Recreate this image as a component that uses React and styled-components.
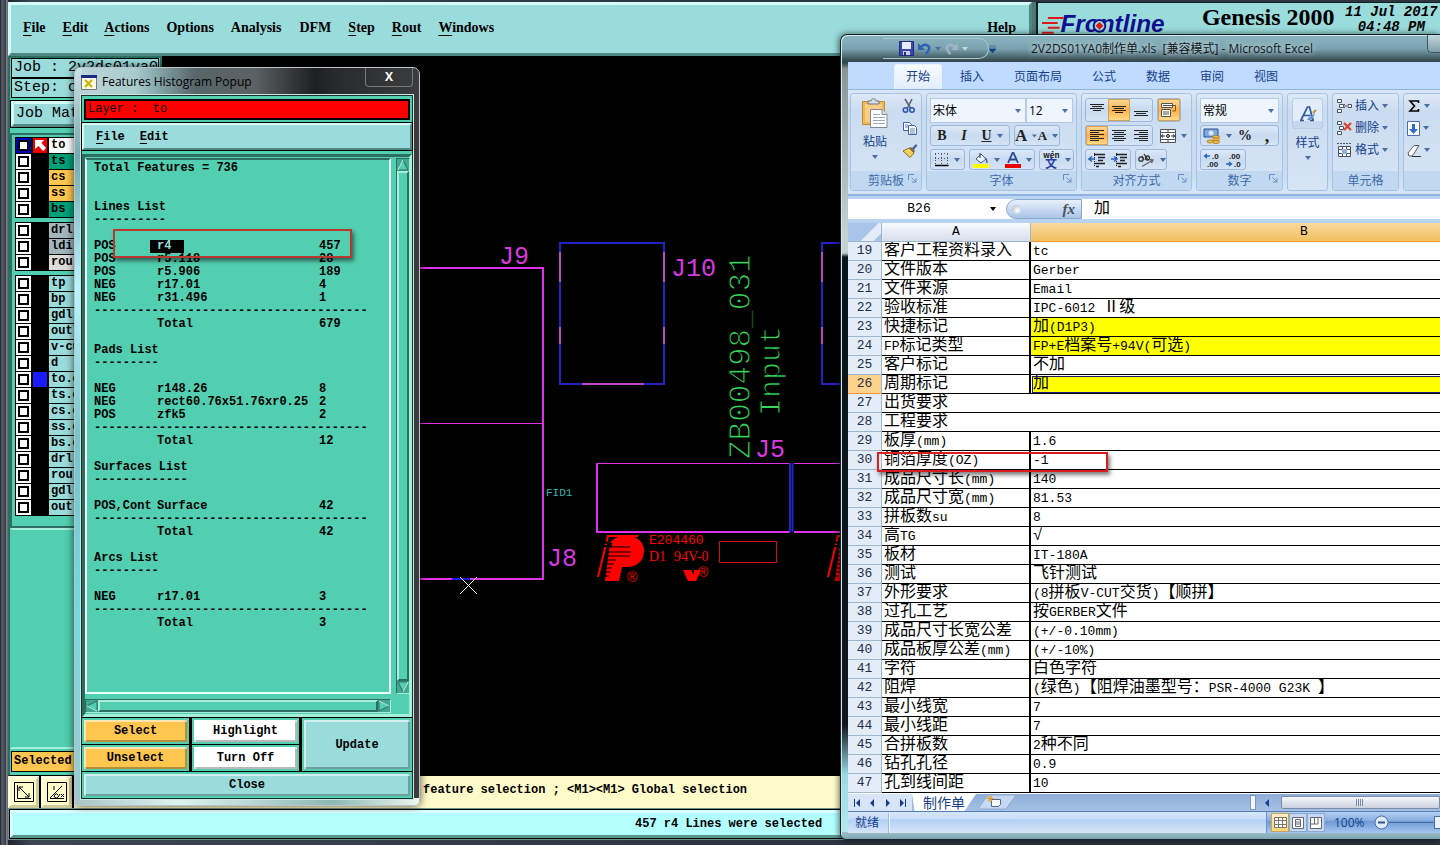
import React from 'react';
import styled, { createGlobalStyle, css } from 'styled-components';

const cjk = '"Open Sans", "Noto Sans CJK SC", sans-serif';
const mono = '"Liberation Mono", "Noto Sans CJK SC", monospace';
const serif = '"Liberation Serif", serif';

const teal = '#52cfb0';
const pale = '#9adbdb';
const deep = '#2c6e60';

const GlobalStyle = createGlobalStyle`
  * {
    box-sizing: border-box;
  }

  body {
    margin: 0;
    overflow: hidden;
    background: #000;
  }

  button, input, select {
    font: inherit;
    color: inherit;
    margin: 0;
    padding: 0;
    border: 0;
    background: none;
    border-radius: 0;
  }
`;

const raised = css`
  border: 3px solid;
  border-color: #d4fbf6 #4f8884 #4f8884 #d4fbf6;
`;

const Desktop = styled.div`
  position: relative;
  height: 100vh;
  overflow: hidden;
`;

/* ---------- Genesis main window ---------- */

const Genesis = styled.div`
  height: 100%;
  display: flex;
  flex-direction: column;
  padding: 2px 0 5px 8px;
  background: linear-gradient(90deg, #1d2027 0, #575f6b 2px, #343a46 6px, #b4bcc4 7px, #20242c 8px, #3b4553 30px, #2d3540 50%);
`;

const TopRow = styled.div`
  display: flex;
  height: 54px;
  gap: 4px;
  flex: none;
  background: #4e7672;
`;

const MenuPanel = styled.nav`
  ${raised}
  display: flex;
  align-items: center;
  background: ${pale};
  width: 1024px;
  padding: 0 13px 2px 12px;
  font: bold 14px ${serif};
`;

const MenuButton = styled.button`
  margin-right: ${({ $gap }) => $gap || 17}px;
  line-height: 16px;
  ${({ $last }) => $last && 'margin-left: auto; margin-right: 0;'}

  &::first-letter {
    text-decoration: ${({ $plain }) => ($plain ? 'none' : 'underline')};
    text-underline-offset: 3px;
  }
`;

const Brand = styled.div`
  flex: 1;
  display: flex;
  overflow: hidden;
  white-space: nowrap;
  background: ${pale};
  border-left: 2px solid #10201f;
  border-top: 1px solid #10201f;
  padding: 2px 0 0 4px;

  h1 {
    margin: 0 0 0 4px;
    font: bold 24px/24px ${serif};
  }

  p {
    margin: 0 0 0 8px;
    width: 100px;
    font: italic bold 14px/15px ${mono};
    text-align: center;
  }
`;

const Middle = styled.div`
  flex: 1;
  display: flex;
  min-height: 0;
  background: #000;
`;

const Sidebar = styled.div`
  width: 154px;
  display: flex;
  flex-direction: column;
  background: ${teal};
  border: 2px solid ${deep};
  border-bottom: 1px solid #000;
  font: 15px/18px ${mono};
`;

const JobLine = styled.div`
  height: 20px;
  border: 1px solid #000;
  background: ${pale};
  margin: 0 1px;
  padding-left: 2px;
  white-space: pre;
`;

const MatrixButton = styled.button`
  ${raised}
  height: 26px;
  margin: 3px 1px 6px;
  padding-left: 2px;
  background: ${pale};
  text-align: left;
  outline: 1px solid #000;
`;

const LayerPanel = styled.div`
  display: flex;
  flex-direction: column;
  gap: 4px;
  padding: 2px 3px 10px;
  border: 2px solid ${deep};
`;

const LayerGroup = styled.div`
  background: #000;
  padding: 1px 0 0 1px;
`;

const LayerRow = styled.label`
  display: grid;
  grid-template-columns: 15px 14px 1fr;
  gap: 2px;
  height: 16px;
  font: bold 12px/15px ${mono};

  input {
    appearance: none;
    width: 15px;
    height: 15px;
    border: 2px solid ${({ $active }) => ($active ? '#0000b8' : '#fff')};
    background: #fff;
    box-shadow: inset 0 0 0 2px #000;
  }

  i {
    display: block;
    height: 15px;
    background: ${({ $mark }) => $mark || '#000'};
  }

  span {
    height: 15px;
    padding-left: 2px;
    background: ${({ $color }) => $color};
  }
`;

const SidePanel = styled.div`
  flex: 1;
  border: 2px solid;
  border-color: #a5efdb #a5efdb ${teal} ${teal};
  border-bottom-color: #a5efdb;
`;

const SelectedBox = styled.div`
  height: 21px;
  margin: 2px 1px 3px;
  padding-left: 2px;
  border: 1px solid #000;
  background: #ffc64f;
  font: bold 12px/19px ${mono};
`;

const Board = styled.svg`
  flex: 1;
  min-width: 0;
  height: 100%;
`;

const PromptRow = styled.div`
  display: flex;
  gap: 2px;
  height: 32px;
  flex: none;
  background: #000;
`;

const CreamButton = styled.button`
  width: 31px;
  background: #fffbc9;
  border: 3px solid;
  border-color: #fffde0 #cfcb9d #cfcb9d #fffde0;
  display: grid;
  place-items: center;
`;

const Prompt = styled.div`
  flex: 1;
  background: #fffbc9;
  padding-left: 313px;
  font: bold 12px/28px ${mono};
  white-space: pre;
`;

const StatusLine = styled.div`
  flex: none;
  height: 32px;
  background: #6d9490;
  padding: 2px 0 2px 2px;

  div {
    height: 100%;
    border: 3px solid;
    border-color: #d8ffff #5d9490 #5d9490 #d8ffff;
    outline: 1px solid #000;
    background: #b3ffff;
    padding-left: 622px;
    font: bold 12px/22px ${mono};
  }
`;

/* ---------- Histogram popup ---------- */

const Popup = styled.section`
  position: absolute;
  left: 74px;
  top: 67px;
  width: 346px;
  height: 739px;
  display: flex;
  flex-direction: column;
  padding: 0 6px 6px;
  border: 1px solid #b8c4c8;
  border-radius: 7px 7px 5px 5px;
  box-shadow: 0 0 8px rgba(0, 0, 0, 0.7);
  background:
    linear-gradient(90deg, #a8c4c6, #dff2ef 30%, #8db8b4 75%, #eef6ee) bottom / 100% 7px no-repeat,
    linear-gradient(90deg, #d3e3e6 0, #86e0e8 5px, #4c7177 7px, transparent 8px) left 30px top 28px / 8px 100% no-repeat,
    linear-gradient(180deg, #cfe0e3, #73aab3 12%, #b9f5ff 30%, #77c3cc 50%, #76dbe1 75%, #9fc7cd) left / 7px 100% no-repeat,
    linear-gradient(90deg, #bdd5d9 0, #a9cccd 60px, #8aabae 80px, #57666a 120px, #5c6163 180px, #1d1f20 240px, #292a2b 260px, #3b3c3d 100%);
`;

const PopupTitle = styled.header`
  height: 27px;
  flex: none;
  display: flex;
  align-items: flex-start;
  font: 12px/27px "Open Sans", sans-serif;

  svg {
    margin: 7px 5px 0 0;
  }

  h2 {
    margin: 0;
    font: inherit;
  }

  button {
    margin-left: auto;
    width: 48px;
    height: 19px;
    border: 1px solid #77797b;
    border-top: 0;
    border-radius: 0 0 4px 4px;
    color: #fff;
    font: bold 12px/16px "Open Sans", sans-serif;
  }
`;

const PopupBody = styled.div`
  flex: 1;
  min-height: 0;
  display: flex;
  flex-direction: column;
  background: ${teal};
  border: 1px solid #15322c;
  outline: 1px solid #cfe5e0;
`;

const LayerTitle = styled.div`
  margin: 3px 2px;
  height: 21px;
  border: 2px solid #000;
  background: #f00;
  padding-left: 2px;
  font: 12px/17px ${mono};
  white-space: pre;
`;

const PopupMenu = styled.nav`
  ${raised}
  border-width: 2px;
  display: flex;
  gap: 15px;
  height: 27px;
  padding-left: 12px;
  background: ${pale};
  outline: 1px solid #000;
  font: bold 12px/22px ${mono};

  ${MenuButton} {
    margin: 0;
  }
`;

const ListFrame = styled.div`
  flex: 1;
  min-height: 0;
  margin-top: 4px;
  border: 3px solid;
  border-color: ${deep} #a5efdb #a5efdb ${deep};
  display: grid;
  grid-template-columns: 306px 14px;
  grid-template-rows: 1fr 14px;
  gap: 5px;
  padding: 1px 0 1px 0;
`;

const Listing = styled.div`
  border: 2px solid;
  border-color: ${deep} #e8fff8 #e8fff8 #f4fffb;
  padding: 2px 0 0 7px;
  font: bold 12px/13px ${mono};
  white-space: pre;
  overflow: hidden;
`;

const ListLine = styled.div`
  height: 13px;
  display: grid;
  grid-template-columns: 63px 162px 1fr;

  mark {
    justify-self: start;
    margin-left: -7px;
    padding: 0 13px 0 7px;
    background: #000;
    color: ${pale};
  }
`;

const ListHeading = styled.div`
  height: 13px;
`;

const Scroller = styled.div`
  display: flex;
  flex-direction: ${({ $across }) => ($across ? 'row' : 'column')};
  background: #43a892;
  border: 1px solid;
  border-color: ${deep} #a5efdb #a5efdb ${deep};

  div {
    flex: 1;
    border: 2px solid;
    border-color: #a5efdb ${deep} ${deep} #a5efdb;
    background: ${teal};
  }
`;

const PopupActions = styled.div`
  display: grid;
  grid-template-columns: 107px 107px 1fr;
  grid-template-rows: 26px 26px 26px;
  gap: 1px 3px;
  background: #000;
  padding-top: 1px;
`;

const ActionButton = styled.button`
  border: 3px solid ${teal};
  font: bold 12px/16px ${mono};
  background: ${({ $color }) => $color || pale};
  box-shadow:
    inset 2px 2px 0 rgba(255, 255, 255, 0.55),
    inset -2px -2px 0 rgba(0, 0, 0, 0.28);
  border-width: 2px;
  ${({ $tall }) => $tall && 'grid-column: 3; grid-row: 1 / 3;'}
  ${({ $wide }) => $wide && 'grid-column: 1 / 4;'}
`;

const RedFrame = styled.div`
  position: absolute;
  left: ${({ $x }) => $x}px;
  top: ${({ $y }) => $y}px;
  width: ${({ $w }) => $w}px;
  height: ${({ $h }) => $h}px;
  border: 2px solid ${({ $color }) => $color};
  box-shadow: 2px 3px 4px rgba(0, 0, 0, 0.5);
  pointer-events: none;
`;

/* ---------- Excel window ---------- */

const Excel = styled.section`
  position: absolute;
  left: 840px;
  right: 0;
  top: 34px;
  bottom: 5px;
  display: flex;
  flex-direction: column;
  overflow: hidden;
  padding: 0 0 6px 7px;
  border: 1px solid #15242a;
  border-right: 0;
  border-radius: 7px 0 0 6px;
  box-shadow: inset 1px 1px 0 #cfe9ee, -1px 0 6px rgba(0, 0, 0, 0.6);
  background:
    linear-gradient(180deg, #9dbfc9, #7fa6b3) bottom / 100% 7px no-repeat,
    linear-gradient(180deg, transparent 0, transparent 28px, #8a9496 34px, #c9d0d0 200px, #c9d0d0 218px, #0c1418 222px, #10161c 690px, #9adbe6 740px, #b8e8ee) left / 7px 100% no-repeat,
    linear-gradient(180deg, #8bb6c1 0, #79a2ae 14px, #334850 26px, #334850 28px);
  font: 12px/16px ${cjk};
  color: #15428b;
`;

const ExcelTitle = styled.header`
  height: 27px;
  flex: none;
  display: flex;
  align-items: center;
  color: #101820;

  h2 {
    margin: 0 0 0 35px;
    font: 12px/27px ${cjk};
    white-space: pre;
    text-shadow: 0 0 6px #fff;
  }

  > button {
    margin-left: auto;
    align-self: flex-start;
    width: 13px;
    height: 18px;
    border: 1px solid #3f555e;
    border-top: 0;
    border-right: 0;
    border-radius: 0 0 0 5px;
    background: linear-gradient(#c3d8df, #7f9faa);
  }
`;

const OfficeButton = styled.button`
  position: absolute;
  left: 10px;
  top: 6px;
  width: 36px;
  height: 38px;
`;

const QuickBar = styled.div`
  display: flex;
  align-items: center;
  height: 21px;
  width: 106px;
  margin-left: 35px;
  padding-left: 16px;
  gap: 4px;
  border: 1px solid #a9c6d2;
  border-left: 0;
  border-radius: 0 10px 10px 0;

  button {
    line-height: 0;
  }
`;

const Tabs = styled.div`
  height: 27px;
  flex: none;
  display: flex;
  gap: 6px;
  padding: 2px 0 0 46px;
  background: #bfdbff;

  button {
    padding: 0 11px;
    border: 1px solid transparent;
    border-bottom: 0;
    border-radius: 3px 3px 0 0;
    line-height: 24px;
    white-space: nowrap;
  }

  button[aria-selected='true'] {
    background: linear-gradient(#f5faff, #e3eefb);
    border-color: #e8f3ff;
  }
`;

const Ribbon = styled.div`
  height: 107px;
  flex: none;
  display: flex;
  gap: 4px;
  padding: 3px 0 3px 2px;
  border-top: 1px solid #8db2e3;
  border-bottom: 2px solid #8db2e3;
  background: linear-gradient(#dbe7f6, #c7daf0 20%, #c9dcf2 80%, #d7e6f7);
`;

const Group = styled.div`
  flex: none;
  width: ${({ $w }) => $w}px;
  display: flex;
  flex-direction: column;
  border: 1px solid #a6c3e3;
  border-radius: 3px;
  background: linear-gradient(#dde9f7, #cbdcf0 18%, #d6e5f6);
  overflow: hidden;

  footer {
    display: flex;
    justify-content: center;
    height: 19px;
    background: #c1d8f1;
    color: #3e6aaa;
    line-height: 19px;
    position: relative;
  }
`;

const Launcher = styled.svg`
  position: absolute;
  right: 4px;
  top: 3px;
`;

const GroupBody = styled.div`
  flex: 1;
  display: flex;
  flex-direction: ${({ $row }) => ($row ? 'row' : 'column')};
  gap: ${({ $row }) => ($row ? 6 : 3)}px;
  padding: 4px 3px 0;
`;

const Line = styled.div`
  display: flex;
  gap: ${({ $tight }) => ($tight ? 0 : 4)}px;
  height: ${({ $tall }) => ($tall ? 24 : 21)}px;
`;

const ToolBox = styled.div`
  display: flex;
  border: ${({ $bare }) => ($bare ? '1px solid transparent' : '1px solid #9ab7dc')};
  border-radius: 3px;
  background: ${({ $bare }) => ($bare ? 'none' : 'linear-gradient(#dbe8f8, #c9dbf1 50%, #d5e4f6)')};
`;

const Tool = styled.button`
  width: ${({ $w }) => $w || 22}px;
  display: flex;
  align-items: center;
  justify-content: center;
  gap: 5px;
  color: #222;
  background: ${({ $on }) => ($on ? 'linear-gradient(#fbdc9d, #fdb04b 50%, #fede8c)' : 'none')};
  box-shadow: ${({ $on }) => ($on ? 'inset 0 0 0 1px #d9a253' : 'none')};
  font: bold ${({ $size }) => $size || 14}px/18px ${serif};
`;

const Picker = styled.div`
  display: flex;
  align-items: center;
  width: ${({ $w }) => $w}px;
  height: 25px;
  border: 1px solid #b3cbe8;
  background: #eef5fd;
  color: #000;
  position: relative;

  select {
    appearance: none;
    width: 100%;
    height: 100%;
    padding-left: 2px;
  }

  svg {
    position: absolute;
    right: 4px;
    top: 10px;
    pointer-events: none;
  }
`;

const BigButton = styled.button`
  width: ${({ $w }) => $w}px;
  display: flex;
  flex-direction: column;
  align-items: center;
  gap: 5px;
  white-space: nowrap;
`;

const StyleTile = styled.span`
  display: grid;
  place-items: center;
  width: 31px;
  height: 31px;
  margin-bottom: 1px;
  border: 1px solid #b5cbe6;
  border-radius: 3px;
  background: linear-gradient(#e2edf9 75%, #c6d8ee 75%);
`;

const Stack = styled.div`
  display: flex;
  flex-direction: column;
  gap: ${({ $gap }) => $gap || 6}px;

  button {
    display: flex;
    align-items: center;
    gap: 3px;
    height: 16px;
    white-space: nowrap;
  }
`;

const FormulaBar = styled.div`
  height: 27px;
  flex: none;
  display: flex;
  align-items: center;
  background: #fff;
  border: solid #b9d3f3;
  border-width: 3px 0 4px;
  color: #000;
  font: 13px/18px ${mono};

  > input {
    width: 142px;
    text-align: center;
  }

  > input:last-child {
    flex: 1;
    text-align: left;
    padding-left: 12px;
    font-size: 16px;
  }
`;

const FxArea = styled.div`
  display: flex;
  align-items: center;
  justify-content: space-between;
  width: 76px;
  height: 20px;
  margin-left: 10px;
  padding: 0 6px 0 5px;
  border: 1px solid #8da9cf;
  border-radius: 10px 0 0 10px;
  background: linear-gradient(#e9f1fb, #a9c4e8);
  font: italic bold 15px/18px ${serif};
  color: #4a5260;

  &::before {
    content: '';
    width: 9px;
    height: 9px;
    border-radius: 50%;
    background: radial-gradient(circle at 60% 60%, #fff, #a9b5c4);
  }
`;

const SheetArea = styled.div`
  flex: 1;
  min-height: 0;
  overflow: hidden;
  background: #fff;
`;

const Sheet = styled.table`
  table-layout: fixed;
  width: 730px;
  border-collapse: separate;
  border-spacing: 0;
  color: #000;
  font: 16px/18px ${mono};

  thead th {
    height: 19px;
    padding: 0;
    border-right: 1px solid #9eb6ce;
    border-bottom: 1px solid #9eb6ce;
    background: linear-gradient(#f8fafd, #d6dfec);
    font-weight: 400;
    font-size: 13px;
    line-height: 18px;
  }

  thead th:first-child {
    background: linear-gradient(135deg, #a9c4e9 60%, #e4ecf7 61%, #e4ecf7 85%, #a9c4e9 86%);
  }

  thead th:last-child {
    background: linear-gradient(#f9d99f, #f1c15f);
    border-color: #f29536;
  }

  tbody tr {
    height: 19px;
  }
`;

const RowHead = styled.th`
  height: 19px;
  padding: 0;
  border-right: 1px solid #9eb6ce;
  border-bottom: 1px solid ${({ $on }) => ($on ? '#f29536' : '#9eb6ce')};
  background: ${({ $on }) => ($on ? '#fdd28d' : '#e4ecf7')};
  color: #1f2f4a;
  font: 13px/18px ${mono};
`;

const Cell = styled.td`
  height: 19px;
  padding: 0 0 0 2px;
  overflow: hidden;
  white-space: pre;
  border-bottom: 1px solid #000;
  border-right: ${({ $edge }) => ($edge ? '2px solid #000' : '0')};
  background: ${({ $fill }) => ($fill ? '#ff0' : '#fff')};
  box-shadow: ${({ $active }) => ($active ? 'inset 1px 1px 0 #fff, inset 2px 2px 0 #1a1a70, inset 0 -1px 0 #1a1a70' : 'none')};
  line-height: 18px;

  div {
    height: 18px;
  }
`;

const Latin = styled.span`
  font-size: 13px;
`;

const SheetTabs = styled.div`
  height: 17px;
  flex: none;
  display: flex;
  background: linear-gradient(#8fadd8, #a6c1e6);
  color: #153f8a;
  overflow: hidden;
`;

const SheetNav = styled.div`
  display: flex;
  width: 64px;
  padding-left: 2px;
  background: #d7e5f7;
  align-items: center;
`;

const NavButton = styled.button`
  width: 15px;
  line-height: 0;
`;

const SheetTab = styled.button`
  width: 64px;
  background: #fff;
  font-size: 14px;
  line-height: 16px;
  clip-path: polygon(0 0, 100% 0, 82% 100%, 4% 100%);
`;

const HScroll = styled.div`
  margin-left: auto;
  width: 191px;
  display: flex;
  align-items: center;
  gap: 8px;
  padding-left: 1px;

  > i {
    width: 6px;
    height: 15px;
    background: #f4f8fe;
    border: 1px solid #7d98c0;
  }

  > div {
    width: 161px;
    height: 13px;
    border: 1px solid #7c8ca8;
    border-radius: 2px;
    background: linear-gradient(#f6f8fb, #cbd2de);
    display: grid;
    place-items: center;
  }
`;

const ExcelStatus = styled.div`
  height: 22px;
  flex: none;
  display: flex;
  align-items: center;
  background: linear-gradient(#d7e6f9, #c7dcf8 35%, #b3d0f5 36%, #d7e5f7);
  border-top: 1px solid #567db0;
  line-height: 20px;
`;

const ReadyCell = styled.div`
  width: 41px;
  padding-left: 7px;
  border-right: 1px solid #9ebbe2;
  box-shadow: 1px 0 0 #eef5fe;
`;

const ZoomArea = styled.div`
  margin-left: auto;
  width: 174px;
  height: 100%;
  display: flex;
  align-items: center;
  overflow: hidden;
  padding-left: 4px;
  border-left: 1px solid #6f92c4;
  background: linear-gradient(#b5d0f4, #88aee0 40%, #6f9ad6 45%, #a6c6f0);

  output {
    margin: 0 9px 0 9px;
  }
`;

const ViewButton = styled.button`
  width: 18px;
  height: 19px;
  flex: none;
  display: grid;
  place-items: center;
  border: 1px solid ${({ $on }) => ($on ? '#c7a25c' : '#8fabd0')};
  background: ${({ $on }) => ($on ? 'linear-gradient(#fff0c5, #fdd375)' : '#c4d8f2')};
`;

const MinusButton = styled.button`
  flex: none;
  line-height: 0;
`;

const ZoomRange = styled.input`
  appearance: none;
  flex: none;
  width: 100px;
  height: 18px;
  background: linear-gradient(#4c6ea3, #4c6ea3) center / 100% 1px no-repeat;

  &::-webkit-slider-thumb {
    appearance: none;
    width: 9px;
    height: 13px;
    border: 1px solid #4c6ea3;
    background: #e9f1fb;
  }
`;

/* ---------- data ---------- */

const layers = [
  [
    ['to', '#fff', '#e00'],
    ['ts', '#00a078'],
    ['cs', '#ffc64f'],
    ['ss', '#ffc64f'],
    ['bs', '#00a078'],
  ],
  [
    ['drl', '#a3b5bd'],
    ['ldi', '#a3b5bd'],
    ['rou', '#dcdcdc'],
  ],
  [
    ['tp', pale],
    ['bp', pale],
    ['gdl', pale],
    ['outl', pale],
    ['v-cut', pale],
    ['d', pale],
    ['to.o', pale, '#1a1aff'],
    ['ts.o', pale],
    ['cs.o', pale],
    ['ss.o', pale],
    ['bs.o', pale],
    ['drl', pale],
    ['rou', pale],
    ['gdl', pale],
    ['outl', pale],
  ],
];

const rule = '-'.repeat(38);

// strings are full-width lines, arrays are [polarity, symbol, count]
const histogram = [
  'Total Features = 736', '', '',
  'Lines List', '----------', '',
  ['POS', 'r4', '457'],
  ['POS', 'r5.118', '28'],
  ['POS', 'r5.906', '189'],
  ['NEG', 'r17.01', '4'],
  ['NEG', 'r31.496', '1'],
  rule,
  ['', 'Total', '679'],
  '',
  'Pads List', '---------', '',
  ['NEG', 'r148.26', '8'],
  ['NEG', 'rect60.76x51.76xr0.25', '2'],
  ['POS', 'zfk5', '2'],
  rule,
  ['', 'Total', '12'],
  '',
  'Surfaces List', '-------------', '',
  ['POS,Cont', 'Surface', '42'],
  rule,
  ['', 'Total', '42'],
  '',
  'Arcs List', '---------', '',
  ['NEG', 'r17.01', '3'],
  rule,
  ['', 'Total', '3'],
];

const sheetRows = [
  ['客户工程资料录入', 'tc'],
  ['文件版本', 'Gerber'],
  ['文件来源', 'Email'],
  ['验收标准', 'IPC-6012 Ⅱ级'],
  ['快捷标记', '加(D1P3)', true],
  ['FP标记类型', 'FP+E档案号+94V(可选)', true],
  ['客户标记', '不加'],
  ['周期标记', '加', true],
  ['出货要求', null],
  ['工程要求', null],
  ['板厚(mm)', '1.6'],
  ['铜箔厚度(OZ)', '-1'],
  ['成品尺寸长(mm)', '140'],
  ['成品尺寸宽(mm)', '81.53'],
  ['拼板数su', '8'],
  ['高TG', '√'],
  ['板材', 'IT-180A'],
  ['测试', '飞针测试'],
  ['外形要求', '(8拼板V-CUT交货)【顺拼】'],
  ['过孔工艺', '按GERBER文件'],
  ['成品尺寸长宽公差', '(+/-0.10mm)'],
  ['成品板厚公差(mm)', '(+/-10%)'],
  ['字符', '白色字符'],
  ['阻焊', '(绿色)【阻焊油墨型号：PSR-4000 G23K 】'],
  ['最小线宽', '7'],
  ['最小线距', '7'],
  ['合拼板数', '2种不同'],
  ['钻孔孔径', '0.9'],
  ['孔到线间距', '10'],
];

// half-width runs are set smaller so that two of them span one han character
const Mixed = ({ text }) =>
  (text.match(/[\x20-\x7e]+|[^\x20-\x7e]+/g) || []).map((run, i) =>
    /[\x20-\x7e]/.test(run) ? <Latin key={i}>{run}</Latin> : <span key={i}>{run}</span>
  );

/* ---------- icons ---------- */

const Caret = ({ color = '#4a6da7' }) => (
  <svg width="6" height="4" viewBox="0 0 6 4"><path d="M0 0h6L3 4z" fill={color} /></svg>
);

const Bars = ({ widths, top = 3, align = 'left' }) => (
  <svg width="16" height="16" stroke="#222" strokeWidth="1">
    {widths.map((w, i) => {
      const x = align === 'left' ? 1 : align === 'right' ? 15 - w : (16 - w) / 2;
      return <path key={i} d={`M${x} ${top + i * 2 + 0.5}h${w}`} />;
    })}
  </svg>
);

const IndentIcon = ({ right }) => (
  <svg width="18" height="16" fill="none" stroke="#222">
    <path d="M6 2.5h11M10 5.5h7M10 8.5h5M6 11.5h11M8 14.5h3" strokeWidth="1.4" />
    <path d="M6.500 1v14" strokeDasharray="1 1" />
    <path d={right ? 'M1 7h5M4 4.500l3 2.500-3 2.500' : 'M7 7H2M4 4.500L1 7l3 2.500'} stroke="#2b62b8" strokeWidth="1.500" />
  </svg>
);

const OfficeLogo = () => (
  <svg width="36" height="38" viewBox="0 0 36 38">
    <defs>
      <radialGradient id="orb" cx="50%" cy="30%" r="75%">
        <stop offset="0" stopColor="#fff" />
        <stop offset="0.55" stopColor="#dce3ea" />
        <stop offset="1" stopColor="#8496a8" />
      </radialGradient>
    </defs>
    <circle cx="18" cy="19" r="17.500" fill="url(#orb)" stroke="#74899c" />
    <g fill="none" strokeWidth="2.800">
      <path d="M16 9.500h-6a2 2 0 0 0-2 2v5a2 2 0 0 0 2 2h2M16 9.500v7" stroke="#d9481c" />
      <path d="M20 13.500h5.500a1.500 1.500 0 0 1 1.500 1.500v4h-6" stroke="#3f8fd2" strokeWidth="2.200" />
      <path d="M9 22v6.500h7.500V22z" stroke="#f2a31b" />
      <path d="M20 22.500h7v6h-7z" stroke="#6da52c" />
    </g>
    <path d="M14 17h8v6h-8z" fill="#fff" opacity="0.800" />
    <path d="M15.500 17.500h5v4.500h-5z" fill="none" stroke="#e9822b" />
  </svg>
);

const SaveIcon = () => (
  <svg width="15" height="15">
    <path d="M.5.5h14v14h-14z" fill="#3c46b0" stroke="#232a80" />
    <path d="M3 1h9v7H3z" fill="#e6ecfa" />
    <path d="M4 10h7v4H4z" fill="#c9cfe6" />
    <path d="M5 11h2v3H5z" fill="#222a70" />
  </svg>
);

const UndoIcon = ({ flip, color }) => (
  <svg width="13" height="13" viewBox="0 0 13 13">
    <g transform={flip ? 'translate(13 0) scale(-1 1)' : undefined}>
      <path d="M3 5c3-4 9-2 8 2-.5 2.500-2 3.500-3.500 5" fill="none" stroke={color} strokeWidth="2.400" />
      <path d="M0 1v7h7z" fill={color} />
    </g>
  </svg>
);

const PasteIcon = () => (
  <svg width="28" height="31">
    <path d="M1.500 3.500h22v23h-22z" fill="#efb65a" stroke="#c98b32" />
    <path d="M4 6h17v18H4z" fill="#f7cf86" />
    <path d="M7 6V3h3c0-3 5-3 5 0h3v3z" fill="#d8dde3" stroke="#6f7780" />
    <path d="M9.500 11.500H21l5 5v13H9.500z" fill="#fff" stroke="#7c8a9c" />
    <path d="M21 11.500v5h5" fill="#dfe6ee" stroke="#7c8a9c" />
    <path d="M12 16.500h7M12 19.500h12M12 22.500h12M12 25.500h12" stroke="#9aa9bd" />
  </svg>
);

const CutIcon = () => (
  <svg width="14" height="16" fill="none">
    <path d="M3 1l6 10M10 1L5 11" stroke="#5b6675" strokeWidth="1.600" />
    <circle cx="3.500" cy="12" r="2.200" stroke="#2c58b0" strokeWidth="1.600" />
    <circle cx="10" cy="12" r="2.200" stroke="#2c58b0" strokeWidth="1.600" />
  </svg>
);

const CopyIcon = () => (
  <svg width="16" height="14" fill="#fff" stroke="#3a63a8">
    <path d="M1.500 1.500h6l2 2v6h-8z" />
    <path d="M6.500 4.500h6l2 2v7h-8z" />
    <path d="M3 4h3M3 6h3M8 8h5M8 10h5M8 12h5" strokeWidth="0.800" />
  </svg>
);

const BrushIcon = () => (
  <svg width="16" height="15">
    <path d="M9 6l5-5 1.500 1.500L11 8z" fill="#4766a0" />
    <path d="M1 8l6-3 5 5-4 4.500z" fill="#efd25c" stroke="#8e6c20" />
    <path d="M7 5l5 5 1-2-4-4z" fill="#8a6a3c" />
  </svg>
);

const BorderIcon = () => (
  <svg width="14" height="14" stroke="#555">
    <path d="M.5 1v10M6.500 1v10M12.500 1v10M0 .5h13M0 5.500h13" strokeDasharray="1 2" />
    <path d="M0 12.500h13.500" stroke="#000" strokeWidth="1.500" />
  </svg>
);

const BucketIcon = () => (
  <svg width="16" height="16">
    <path d="M3 7l5-5 5 5-5 4z" fill="#eef3fa" stroke="#46597a" />
    <path d="M7 1v5M12 6c2 1 2 3 2 5" fill="none" stroke="#46597a" strokeWidth="1.300" />
    <path d="M0 12h16v4H0z" fill="#ff0" />
  </svg>
);

const FontColorIcon = () => (
  <svg width="16" height="16">
    <path d="M3 11l4.500-10h1L13 11M5 7.500h6" fill="none" stroke="#2c4b8e" strokeWidth="1.800" />
    <path d="M0 12h16v4H0z" fill="#e00" />
  </svg>
);

const WrapIcon = () => (
  <svg width="18" height="16" fill="#fff" stroke="#555">
    <path d="M1.500 1.500h11v4h-11zM1.500 7.500h9v7h-9zM3 3.500h12M3 10h6M3 12h6" />
    <path d="M15.500 3v6h-3" fill="none" stroke="#8a5a18" />
  </svg>
);

const MergeIcon = () => (
  <svg width="16" height="14" fill="#fff" stroke="#555">
    <path d="M.5.5h15v13H.5zM0 3.500h16M0 10.500h16M8 0v3M8 11v3" />
    <path d="M1 7h4M15 7h-4M3 5.500L1 7l2 1.500M13 5.500L15 7l-2 1.500" fill="none" stroke="#234" />
    <circle cx="8" cy="7" r="1.400" fill="none" stroke="#000" />
  </svg>
);

const OrientIcon = () => (
  <svg width="18" height="16" fill="none" stroke="#333" strokeWidth="1.300">
    <circle cx="4" cy="7" r="2.200" /><path d="M5 4l2 4M7 2l4 6" /><circle cx="10.500" cy="6" r="2" />
    <path d="M5 14.500L16 8M12.500 7.500L16 8l-1.500 3" stroke="#666" />
  </svg>
);

const MoneyIcon = () => (
  <svg width="18" height="16">
    <path d="M1 1h14v8H1z" fill="#7fa8df" stroke="#2b4f95" />
    <circle cx="8" cy="5" r="2.500" fill="#d9e7f9" />
    <g fill="#f2c14a" stroke="#a8741a" strokeWidth="0.800">
      <ellipse cx="13" cy="9" rx="3.500" ry="1.500" /><ellipse cx="13" cy="11.500" rx="3.500" ry="1.500" />
      <ellipse cx="13" cy="14" rx="3.500" ry="1.500" /><ellipse cx="7" cy="13.500" rx="3" ry="1.500" />
    </g>
  </svg>
);

const DecimalIcon = ({ more }) => (
  <svg width="18" height="16" fontFamily="Liberation Sans" fontSize="8" fontWeight="bold" fill="#222">
    <text x={more ? 9 : 4} y="7">{more ? '.0' : '.00'}</text>
    <text x={more ? 4 : 9} y="15">{more ? '.00' : '.0'}</text>
    <path d={more ? 'M7 4H2M4 2L1.500 4 4 6' : 'M1 12h5M4 10l2.500 2L4 14'} fill="none" stroke="#2b62b8" strokeWidth="1.300" />
  </svg>
);

const StyleIcon = () => (
  <svg width="18" height="18">
    <path d="M2 15L8.500 2h2L14 15M4.500 10.500h7M1 15.500h4M11 15.500h4" fill="none" stroke="#2f5a9c" strokeWidth="1.700" />
    <path d="M8 15c2-4 4-3 8-7-1 5-4 8-8 7z" fill="#6b95d0" />
    <path d="M14 8l3-3" stroke="#c98b32" strokeWidth="2" />
  </svg>
);

const CellIcon = ({ kind }) => (
  <svg width="16" height="16" fill="#fff" stroke="#4a5568">
    {kind === 'format' ? (
      <>
        <path d="M2.500 4.500h12v10h-12zM2 7.500h13M2 11.500h13M6.500 4v11M10.500 4v11" />
        <path d="M6 7h5v5H6z" fill="#8fb2e4" stroke="none" />
        <path d="M1 1.500h14" strokeDasharray="2 1" />
      </>
    ) : (
      <>
        <path d="M1.500 1.500h4v3h-4zM1.500 11.500h4v3h-4zM3.500 6.500h4v3h-4z" />
        {kind === 'insert'
          ? <path d="M12 6.500h3.500v3H12zM7 8h4M9 6L7 8l2 2" />
          : <path d="M8 3l7 7M15 3l-7 7" stroke="#e0402a" strokeWidth="2.200" />}
      </>
    )}
  </svg>
);

const FillIcon = () => (
  <svg width="13" height="15">
    <path d="M.5.5h12v14H.5z" fill="#fff" stroke="#4a6da7" />
    <path d="M5 3h3v5h3l-4.500 5L2 8h3z" fill="#2f6fd0" />
  </svg>
);

const EraserIcon = () => (
  <svg width="14" height="13">
    <path d="M1 9l6-7.500h5L7 9.500 5 12H2z" fill="#fff" stroke="#556" />
    <path d="M5 12.500h9" stroke="#333" />
  </svg>
);

const FrontlineLogo = () => (
  <svg width="160" height="30" viewBox="0 0 160 30">
    <g stroke="#e01818" strokeWidth="2">
      <path d="M6 13h16M0 18h16M6 23h12M0 28h12" />
    </g>
    <text x="19" y="27" fontFamily="Liberation Sans" fontSize="25" fontWeight="bold" fontStyle="italic" fill="#101090">
      Frontline
    </text>
    <circle cx="59" cy="21" r="6" fill={pale} stroke="#101090" strokeWidth="2" />
    <path d="M59 17l4 4-4 4-4-4z" fill="#e01818" />
  </svg>
);

const ArrowGlyph = ({ turn }) => (
  <svg width="12" height="12" viewBox="0 0 12 12">
    <g transform={`rotate(${turn} 6 6)`}>
      <path d="M6 1L1 11h10z" fill={teal} stroke={deep} />
      <path d="M6 1L1 11" stroke="#c6fff0" />
    </g>
  </svg>
);

const NavGlyph = ({ d }) => (
  <svg width="9" height="8"><path d={d} fill="#153f8a" /></svg>
);

const PcbMark = () => (
  <g fill="#f00">
    <path d="M598 577l10-41h30" fill="none" stroke="#f00" strokeWidth="2" />
    <path d="M605 581l5-38c8-11 34-10 34 8 0 12-10 17-22 16l-3 14z" />
    <path d="M608 547h22M607 552h24M606 556h24M606 560h10M605 564h9M604 568h8M604 572h7M603 576h6" stroke="#000" />
    <path d="M604 542l8 2M604 546l8 0" stroke="#000" strokeWidth="2" />
  </g>
);

const BoardDrawing = () => (
  <Board aria-label="PCB legend layer">
    <g transform="translate(-162 -56)" fill="none">
      <g stroke="#e030e8" strokeWidth="2">
        <path d="M420 268h123v311H420" />
        <path d="M420 423.500h123" strokeWidth="1" />
        <path d="M790 463.500H597" strokeWidth="1" />
        <path d="M597 463v69h193M794 532h60" />
        <path d="M794 463.500h60" strokeWidth="1" />
      </g>
      <path d="M452 579h18" stroke="#1c1cf0" strokeWidth="2" />
      <g stroke="#2222c8" strokeWidth="2">
        <path d="M560 243h104v141H560z" />
        <path d="M790 463v69M792.500 463v69" />
        <path d="M860 243h-38v141h38" />
      </g>
      <path d="M560 252v30M560 327v17M664 252v30M664 327v17M582 384h62M822 252v30M822 327v17" stroke="#b848c0" strokeWidth="2" />
      <path d="M460 577l17 17M477 577l-17 17" stroke="#fff" />
      <g fill="#d838e0" fontFamily="Liberation Mono" fontSize="25">
        <text x="499" y="264">J9</text>
        <text x="671" y="276">J10</text>
        <text x="755" y="457">J5</text>
        <text x="547" y="566">J8</text>
      </g>
      <g fill="#35d45a" stroke="#000" strokeWidth="1" fontFamily="Liberation Mono">
        <text transform="translate(750 459) rotate(-90)" fontSize="31">ZB00498_031</text>
        <text transform="translate(780 416) rotate(-90)" fontSize="30">Input</text>
      </g>
      <text x="546" y="496" fill="#28b8b0" fontFamily="Liberation Mono" fontSize="11">FID1</text>
      <PcbMark />
      <g transform="translate(230 0)"><PcbMark /></g>
      <g fill="#f00">
        <text x="649" y="544" fontFamily="Liberation Mono" fontSize="13">E204460</text>
        <text x="649" y="561" fontFamily="Liberation Serif" fontSize="14">D1</text>
        <text x="674" y="561" fontFamily="Liberation Serif" fontSize="14">94V-0</text>
        <text x="627" y="582" fontFamily="Liberation Sans" fontSize="14">®</text>
        <text x="698" y="577" fontFamily="Liberation Sans" fontSize="14">®</text>
        <path d="M683 570h8l3 5v-5h7l-5 11h-8z" />
      </g>
      <path d="M719.500 541.500h57v21h-57z" stroke="#d01010" />
    </g>
  </Board>
);

/* ---------- windows ---------- */

const GenesisWindow = () => (
  <Genesis>
    <TopRow>
      <MenuPanel>
        <MenuButton>File</MenuButton>
        <MenuButton $gap={16}>Edit</MenuButton>
        <MenuButton>Actions</MenuButton>
        <MenuButton $plain>Options</MenuButton>
        <MenuButton $plain $gap={18}>Analysis</MenuButton>
        <MenuButton $plain>DFM</MenuButton>
        <MenuButton>Step</MenuButton>
        <MenuButton>Rout</MenuButton>
        <MenuButton>Windows</MenuButton>
        <MenuButton $plain $last>Help</MenuButton>
      </MenuPanel>
      <Brand>
        <FrontlineLogo />
        <h1>Genesis 2000</h1>
        <p>11 Jul 2017<br />04:48 PM</p>
      </Brand>
    </TopRow>
    <Middle>
      <Sidebar>
        <JobLine>Job : 2v2ds01ya0</JobLine>
        <JobLine>Step: cad</JobLine>
        <MatrixButton>Job Matrix</MatrixButton>
        <LayerPanel>
          {layers.map((group, g) => (
            <LayerGroup key={g}>
              {group.map(([name, color, mark], i) => (
                <LayerRow key={i} $color={color} $mark={mark} $active={g === 0 && i === 0}>
                  <input type="checkbox" />
                  <i>
                    {name === 'to' && (
                      <svg width="14" height="15"><path d="M2 2h9L8.500 5l4.500 5-3 3-4.500-5L2 11z" fill="#fff" /></svg>
                    )}
                  </i>
                  <span>{name}</span>
                </LayerRow>
              ))}
            </LayerGroup>
          ))}
        </LayerPanel>
        <SidePanel />
        <SelectedBox>Selected : 457</SelectedBox>
      </Sidebar>
      <BoardDrawing />
    </Middle>
    <PromptRow>
      <CreamButton aria-label="Zoom extents">
        <svg width="20" height="20" fill="none" stroke="#000">
          <path d="M.5.5h19v19H.5zM3.500 3v13.500H17M5 5l10 10M5 9V5h4M15 11v4h-4" />
        </svg>
      </CreamButton>
      <CreamButton aria-label="Measure">
        <svg width="20" height="20" fill="none" stroke="#000">
          <path d="M.5.5h19v19H.5zM3 16L15 4M3 16.500h14M7 4v4M11 13a2 2 0 1 0 0 2l2-3M14 12l3 3M17 12l-3 3" />
        </svg>
      </CreamButton>
      <Prompt>{'<M1> Single feature selection ; <M1><M1> Global selection'.slice(7)}</Prompt>
    </PromptRow>
    <StatusLine><div>457 r4 Lines were selected</div></StatusLine>
  </Genesis>
);

const HistogramPopup = () => (
  <Popup>
    <PopupTitle>
      <svg width="16" height="15">
        <path d="M.5.5h15v14H.5z" fill="#f8f8e8" stroke="#777" />
        <path d="M0 0h16v3H0z" fill="#1c2a80" />
        <path d="M4 5l7 7M11 5l-7 7" stroke="#c9b400" strokeWidth="2" />
      </svg>
      <h2>Features Histogram Popup</h2>
      <button aria-label="Close window">X</button>
    </PopupTitle>
    <PopupBody>
      <LayerTitle>Layer :  to</LayerTitle>
      <PopupMenu>
        <MenuButton>File</MenuButton>
        <MenuButton>Edit</MenuButton>
      </PopupMenu>
      <ListFrame>
        <Listing>
          {histogram.map((line, i) =>
            Array.isArray(line) ? (
              <ListLine key={i}>
                <span>{line[0]}</span>
                {line[1] === 'r4' ? <mark>r4</mark> : <span>{line[1]}</span>}
                <span>{line[2]}</span>
              </ListLine>
            ) : (
              <ListHeading key={i}>{line}</ListHeading>
            )
          )}
        </Listing>
        <Scroller>
          <ArrowGlyph turn={0} />
          <div />
          <ArrowGlyph turn={180} />
        </Scroller>
        <Scroller $across>
          <ArrowGlyph turn={-90} />
          <div />
          <ArrowGlyph turn={90} />
        </Scroller>
      </ListFrame>
      <PopupActions>
        <ActionButton $color="#ffc64f">Select</ActionButton>
        <ActionButton $color="#fff">Highlight</ActionButton>
        <ActionButton $tall>Update</ActionButton>
        <ActionButton $color="#ffc64f">Unselect</ActionButton>
        <ActionButton $color="#fff">Turn Off</ActionButton>
        <ActionButton $wide>Close</ActionButton>
      </PopupActions>
    </PopupBody>
  </Popup>
);

const GroupFooter = ({ children, launcher }) => (
  <footer>
    {children}
    {launcher && (
      <Launcher width="9" height="9" fill="none" stroke="#6a8cc0">
        <path d="M.5 6V.5H6M3.500 3.500l4 4M8 4v4H4" />
      </Launcher>
    )}
  </footer>
);

const ExcelRibbon = () => (
  <Ribbon>
    <Group $w={72}>
      <GroupBody $row>
        <BigButton $w={42}><PasteIcon />粘贴<Caret /></BigButton>
        <Stack>
          <button aria-label="剪切"><CutIcon /></button>
          <button aria-label="复制"><CopyIcon /></button>
          <button aria-label="格式刷"><BrushIcon /></button>
        </Stack>
      </GroupBody>
      <GroupFooter launcher>剪贴板</GroupFooter>
    </Group>

    <Group $w={151}>
      <GroupBody>
        <Line $tall $tight>
          <Picker $w={96}>
            <select aria-label="字体"><option>宋体</option></select>
            <Caret />
          </Picker>
          <Picker $w={47}>
            <select aria-label="字号"><option>12</option></select>
            <Caret />
          </Picker>
        </Line>
        <Line>
          <ToolBox>
            <Tool>B</Tool>
            <Tool><em>I</em></Tool>
            <Tool $w={34}><u>U</u><Caret /></Tool>
          </ToolBox>
          <ToolBox>
            <Tool $size={17}>A<Caret /></Tool>
            <Tool $size={13}>A<Caret /></Tool>
          </ToolBox>
        </Line>
        <Line>
          <ToolBox><Tool $w={33}><BorderIcon /><Caret /></Tool></ToolBox>
          <ToolBox>
            <Tool $w={32}><BucketIcon /><Caret /></Tool>
            <Tool $w={32}><FontColorIcon /><Caret /></Tool>
          </ToolBox>
          <ToolBox>
            <Tool $w={33}>
              <svg width="18" height="18" fontFamily="Noto Sans CJK SC" fill="#222">
                <text x="1" y="7" fontSize="8" fontWeight="bold">wén</text>
                <text x="3" y="17" fontSize="12" fill="#2c3fa8">文</text>
              </svg>
              <Caret />
            </Tool>
          </ToolBox>
        </Line>
      </GroupBody>
      <GroupFooter launcher>字体</GroupFooter>
    </Group>

    <Group $w={111}>
      <GroupBody>
        <Line $tall>
          <ToolBox>
            <Tool><Bars widths={[14, 10, 14, 8]} top={2} align="center" /></Tool>
            <Tool $on><Bars widths={[14, 10, 14, 8]} top={4} align="center" /></Tool>
            <Tool><Bars widths={[14, 10, 14]} top={9} align="center" /></Tool>
          </ToolBox>
          <ToolBox><Tool $on><WrapIcon /></Tool></ToolBox>
        </Line>
        <Line>
          <ToolBox>
            <Tool $on><Bars widths={[14, 9, 14, 9, 14, 9]} top={2} /></Tool>
            <Tool><Bars widths={[14, 10, 14, 10, 14, 10]} top={2} align="center" /></Tool>
            <Tool><Bars widths={[14, 9, 14, 9, 14, 9]} top={2} align="right" /></Tool>
          </ToolBox>
          <ToolBox $bare><Tool $w={30}><MergeIcon /><Caret /></Tool></ToolBox>
        </Line>
        <Line>
          <ToolBox>
            <Tool><IndentIcon /></Tool>
            <Tool><IndentIcon right /></Tool>
          </ToolBox>
          <ToolBox><Tool $w={30}><OrientIcon /><Caret /></Tool></ToolBox>
        </Line>
      </GroupBody>
      <GroupFooter launcher>对齐方式</GroupFooter>
    </Group>

    <Group $w={87}>
      <GroupBody>
        <Line $tall>
          <Picker $w={79}>
            <select aria-label="数字格式"><option>常规</option></select>
            <Caret />
          </Picker>
        </Line>
        <Line>
          <ToolBox>
            <Tool $w={33}><MoneyIcon /><Caret /></Tool>
            <Tool>%</Tool>
            <Tool $size={18}>,</Tool>
          </ToolBox>
        </Line>
        <Line>
          <ToolBox>
            <Tool><DecimalIcon more /></Tool>
            <Tool><DecimalIcon /></Tool>
          </ToolBox>
        </Line>
      </GroupBody>
      <GroupFooter launcher>数字</GroupFooter>
    </Group>

    <Group $w={41}>
      <GroupBody>
        <BigButton $w={33}><StyleTile><StyleIcon /></StyleTile>样式<Caret /></BigButton>
      </GroupBody>
    </Group>

    <Group $w={67}>
      <GroupBody>
        <Stack>
          <button><CellIcon kind="insert" />插入<Caret /></button>
          <button><CellIcon kind="delete" />删除<Caret /></button>
          <button><CellIcon kind="format" />格式<Caret /></button>
        </Stack>
      </GroupBody>
      <GroupFooter>单元格</GroupFooter>
    </Group>

    <Group $w={160}>
      <GroupBody $row>
        <Stack>
          <button aria-label="求和">
            <svg width="14" height="14"><path d="M11.500 4V2H3l4.500 5L3 12h8.500v-2" fill="none" stroke="#000" strokeWidth="1.600" /></svg>
            <Caret />
          </button>
          <button aria-label="填充"><FillIcon /><Caret /></button>
          <button aria-label="清除"><EraserIcon /><Caret /></button>
        </Stack>
      </GroupBody>
      <GroupFooter />
    </Group>
  </Ribbon>
);

const ExcelWindow = () => (
  <Excel>
    <ExcelTitle>
      <QuickBar>
        <button aria-label="保存"><SaveIcon /></button>
        <button aria-label="撤消"><UndoIcon color="#2f62b5" /></button>
        <Caret />
        <button aria-label="恢复"><UndoIcon flip color="#9fb3c4" /></button>
        <Caret color="#c4d3dd" />
      </QuickBar>
      <svg width="7" height="8" style={undefined}><path d="M0 1h7M0 3h7M0 4l3.500 4L7 4z" fill="#15428b" stroke="#15428b" strokeWidth="0.500" /></svg>
      <h2>{'2V2DS01YA0制作单.xls  [兼容模式] - Microsoft Excel'}</h2>
      <button aria-label="最小化" />
    </ExcelTitle>
    <Tabs role="tablist">
      {['开始', '插入', '页面布局', '公式', '数据', '审阅', '视图'].map((name, i) => (
        <button key={name} role="tab" aria-selected={i === 0}>{name}</button>
      ))}
    </Tabs>
    <ExcelRibbon />
    <FormulaBar>
      <input aria-label="名称框" defaultValue="B26" />
      <Caret color="#000" />
      <FxArea>fx</FxArea>
      <input aria-label="编辑栏" defaultValue="加" />
    </FormulaBar>
    <SheetArea>
      <Sheet>
        <colgroup>
          <col width="34" />
          <col width="149" />
          <col />
        </colgroup>
        <thead>
          <tr><th /><th>A</th><th>B</th></tr>
        </thead>
        <tbody>
          {sheetRows.map(([label, value, fill], i) => (
            <tr key={label}>
              <RowHead $on={i === 7}>{i + 19}</RowHead>
              <Cell $edge={value !== null}><div><Mixed text={label} /></div></Cell>
              <Cell $fill={fill} $active={i === 7}><div><Mixed text={value || ''} /></div></Cell>
            </tr>
          ))}
        </tbody>
      </Sheet>
    </SheetArea>
    <SheetTabs>
      <SheetNav>
        <NavButton aria-label="第一个"><NavGlyph d="M1 0h1v8H1zM7 0v8L3 4z" /></NavButton>
        <NavButton aria-label="上一个"><NavGlyph d="M6 0v8L2 4z" /></NavButton>
        <NavButton aria-label="下一个"><NavGlyph d="M3 0v8l4-4z" /></NavButton>
        <NavButton aria-label="最后一个"><NavGlyph d="M7 0h1v8H7zM2 0v8l4-4z" /></NavButton>
      </SheetNav>
      <SheetTab>制作单</SheetTab>
      <svg width="44" height="17">
        <path d="M2 15L12 1h28L30 15z" fill="#c5d9f3" stroke="#8eabd4" />
        <path d="M15.500 5.500h9v5l-2 2h-7z" fill="#fff" stroke="#56688a" />
        <path d="M14 1v7M10.500 4.500h7M12 2l4 5M16 2l-4 5" stroke="#eb9c1e" />
      </svg>
      <HScroll>
        <i />
        <NavGlyph d="M5 0v8L1 4z" />
        <div><svg width="8" height="7"><path d="M.5 0v7M2.500 0v7M4.500 0v7M6.500 0v7" stroke="#7c8ca8" /></svg></div>
      </HScroll>
    </SheetTabs>
    <ExcelStatus>
      <ReadyCell>就绪</ReadyCell>
      <ZoomArea>
        <ViewButton $on aria-label="普通">
          <svg width="13" height="11" fill="#fff" stroke="#776"><path d="M.5.5h12v10H.5zM0 3.500h13M0 7.500h13M4.500 0v11M8.500 0v11" /></svg>
        </ViewButton>
        <ViewButton aria-label="页面布局视图">
          <svg width="12" height="12" fill="#fff" stroke="#667"><path d="M.5.5h11v11H.5zM3.500 2.500h5v7h-5zM4 5h4M4 7h4" /></svg>
        </ViewButton>
        <ViewButton aria-label="分页预览">
          <svg width="12" height="12" fill="#fff" stroke="#667"><path d="M.5.5h11v11H.5zM4.500 0v7M8 0v7H0" /></svg>
        </ViewButton>
        <output>100%</output>
        <MinusButton aria-label="缩小">
          <svg width="15" height="15"><circle cx="7.500" cy="7.500" r="6.500" fill="#dfeaf8" stroke="#4c6ea3" /><path d="M4 7.500h7" stroke="#36527f" strokeWidth="2" /></svg>
        </MinusButton>
        <ZoomRange type="range" aria-label="显示比例" defaultValue="50" />
      </ZoomArea>
    </ExcelStatus>
  </Excel>
);

const App = () => (
  <>
    <GlobalStyle />
    <Desktop>
      <GenesisWindow />
      <HistogramPopup />
      <ExcelWindow />
      <RedFrame $x={113} $y={229} $w={239} $h={29} $color="#b8382e" />
      <RedFrame $x={877} $y={452} $w={231} $h={20} $color="#d81e1e" />
    </Desktop>
  </>
);

export default App;
